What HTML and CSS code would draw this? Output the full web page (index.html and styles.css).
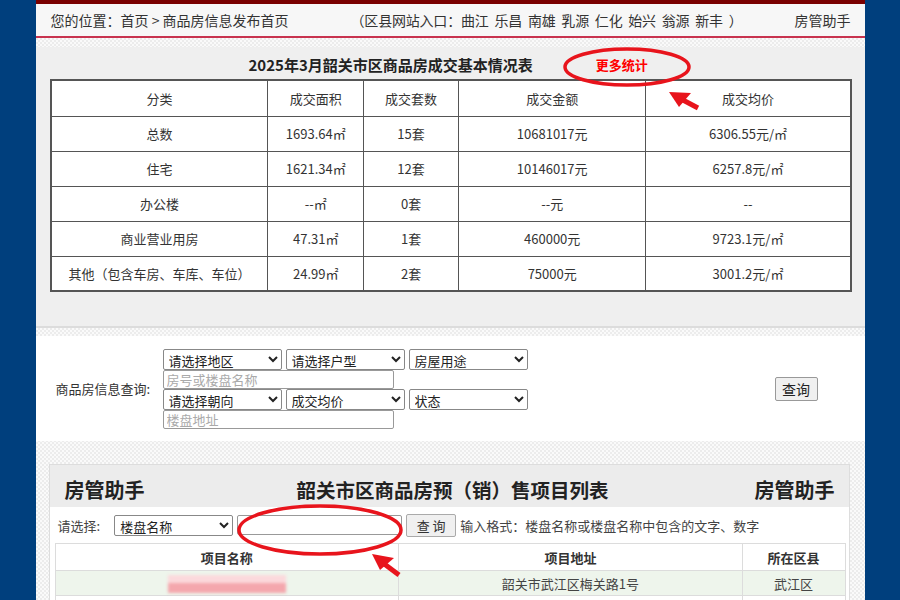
FILE: index.html
```html
<!DOCTYPE html>
<html lang="zh-CN">
<head>
    <meta charset="UTF-8">
    <meta name="viewport" content="width=device-width, initial-scale=1.0">
    <title>商品房信息发布首页</title>
    <link rel="stylesheet" href="styles.css">
</head>
<body>
<div class="page">
    <div class="topLine"></div>
    <div class="crumb">
        <span>您的位置：首页 &gt; 商品房信息发布首页</span>
        <span class="crumbCounty">（区县网站入口：曲江&nbsp; 乐昌&nbsp; 南雄&nbsp; 乳源&nbsp; 仁化&nbsp; 始兴&nbsp; 翁源&nbsp; 新丰 &nbsp;）</span>
        <span class="crumbRight">房管助手</span>
    </div>
    <div class="strip"></div>

    <div class="stats">
        <div class="statsTitle">
            <span class="statsName">2025年3月韶关市区商品房成交基本情况表</span>
            <a class="moreLink">更多统计</a>
        </div>
        <table class="statsTable">
            <tr class="headRow">
                <td class="c1">分类</td>
                <td class="c2">成交面积</td>
                <td class="c3">成交套数</td>
                <td class="c4">成交金额</td>
                <td class="c5">成交均价</td>
            </tr>
            <tr><td>总数</td><td>1693.64㎡</td><td>15套</td><td>10681017元</td><td>6306.55元/㎡</td></tr>
            <tr><td>住宅</td><td>1621.34㎡</td><td>12套</td><td>10146017元</td><td>6257.8元/㎡</td></tr>
            <tr><td>办公楼</td><td>--㎡</td><td>0套</td><td>--元</td><td>--</td></tr>
            <tr><td>商业营业用房</td><td>47.31㎡</td><td>1套</td><td>460000元</td><td>9723.1元/㎡</td></tr>
            <tr><td>其他（包含车房、车库、车位）</td><td>24.99㎡</td><td>2套</td><td>75000元</td><td>3001.2元/㎡</td></tr>
        </table>
    </div>
    <div class="strip strip2"></div>

    <div class="query">
        <div class="queryLabel">商品房信息查询:</div>
        <div class="queryFields">
            <div class="selRow">
                <select class="sel"><option>请选择地区</option></select>
                <select class="sel"><option>请选择户型</option></select>
                <select class="sel"><option>房屋用途</option></select>
            </div>
            <input class="txt" type="text" placeholder="房号或楼盘名称">
            <div class="selRow">
                <select class="sel"><option>请选择朝向</option></select>
                <select class="sel"><option>成交均价</option></select>
                <select class="sel"><option>状态</option></select>
            </div>
            <input class="txt" type="text" placeholder="楼盘地址">
        </div>
        <button class="queryBtn">查询</button>
    </div>

    <div class="listWrap">
        <div class="listPanel">
            <div class="listHead">
                <span>房管助手</span>
                <span class="listTitle">韶关市区商品房预（销）售项目列表</span>
                <span>房管助手</span>
            </div>
            <div class="searchRow">
                <span>请选择:</span>
                <select class="sel sel2"><option>楼盘名称</option></select>
                <input class="txt2" type="text">
                <button class="searchBtn">查 询</button>
                <span>输入格式：楼盘名称或楼盘名称中包含的文字、数字</span>
            </div>
            <table class="listTable">
                <tr class="listTh">
                    <td class="l1">项目名称</td>
                    <td class="l2">项目地址</td>
                    <td class="l3">所在区县</td>
                </tr>
                <tr class="listTr">
                    <td><span class="blurName"></span></td>
                    <td>韶关市武江区梅关路1号</td>
                    <td>武江区</td>
                </tr>
                <tr class="listTr2"><td></td><td></td><td></td></tr>
            </table>
        </div>
    </div>

    <!-- red marks drawn on the screenshot -->
    <svg class="marks" width="900" height="600" viewBox="0 0 900 600">
        <ellipse cx="626" cy="67" rx="62" ry="18" fill="none" stroke="#e8141c" stroke-width="3.5"/>
        <line x1="697" y1="108" x2="680" y2="99" stroke="#e8141c" stroke-width="5"/>
        <polygon points="668,92 690,93 678,107" fill="#e8141c"/>
        <ellipse cx="319" cy="530" rx="81" ry="24" fill="none" stroke="#e8141c" stroke-width="3.5"/>
        <line x1="398" y1="575" x2="382" y2="563" stroke="#e8141c" stroke-width="5"/>
        <polygon points="371,554 393,558 379,570" fill="#e8141c"/>
    </svg>
</div>
</body>
</html>
```

FILE: styles.css
```css
*{
    padding: 0;
    margin: 0;
    box-sizing: border-box;
}
body{
    background-color: #003f7d;
    font-family: "Noto Sans CJK SC", "Liberation Sans", sans-serif;
    color: #333;
    font-size: 13px;
}
.page{
    position: relative;
    width: 829px;
    height: 600px;
    margin: 0 auto;
    overflow: hidden;
    background: repeating-conic-gradient(#ececec 0 25%, #fafafa 0 50%) 0 0 / 4px 4px;
}
.topLine{
    height: 4px;
    background-color: #7a0000;
}
.crumb{
    height: 34px;
    display: flex;
    align-items: center;
    padding: 0 14px 0 15px;
    background-color: #f7f7f7;
    border-bottom: 2px solid #c8334f;
    font-size: 14px;
    color: #333;
}
.crumbCounty{
    margin-left: 62px;
    letter-spacing: -0.2px;
}
.crumbRight{
    margin-left: auto;
}
.strip{
    height: 9px;
}
.stats{
    background-color: #efefef;
    padding: 3px 13px 34px 14px;
    border-bottom: 2px solid #dcdcdc;
}
.statsTitle{
    height: 29px;
    display: flex;
    align-items: center;
    font-size: 15px;
    font-weight: bold;
    color: #222;
}
.statsName{
    margin-left: 199px;
}
.moreLink{
    margin-left: 63px;
    font-size: 13px;
    color: #f00;
}
.statsTable{
    width: 802px;
    border-collapse: collapse;
    background-color: #fff;
    border: 2px solid #555;
}
.statsTable td{
    border: 1px solid #555;
    height: 35px;
    text-align: center;
    color: #333;
}
.statsTable .headRow td{
    height: 36px;
}
.c1{ width: 218px; }
.c2{ width: 96px; }
.c3{ width: 95px; }
.c4{ width: 188px; }
.c5{ width: 205px; }
.strip2{
    height: 8px;
}
.query{
    height: 105px;
    background-color: #fff;
    display: flex;
    align-items: center;
    padding: 0 47px 0 20px;
}
.queryLabel{
    flex-shrink: 0;
    width: 107px;
    font-size: 13px;
}
.queryFields{
    flex-shrink: 0;
    display: flex;
    flex-direction: column;
}
.selRow{
    display: flex;
    gap: 4px;
}
.sel{
    flex-shrink: 0;
    width: 119px;
    height: 21px;
    padding: 0 1px;
    font-family: "Noto Sans CJK SC", sans-serif;
    font-size: 13px;
    color: #222;
    border: 1px solid #888;
    border-radius: 2px;
    background-color: #fff;
}
.txt{
    width: 231px;
    height: 19px;
    border: 1px solid #999;
    border-radius: 2px;
    padding-left: 3px;
    font-family: "Noto Sans CJK SC", sans-serif;
    font-size: 13px;
}
.txt::placeholder{
    color: #aaa;
}
.queryBtn{
    flex-shrink: 0;
    margin-left: auto;
    width: 43px;
    height: 24px;
    font-family: "Noto Sans CJK SC", sans-serif;
    font-size: 14px;
    color: #222;
    background-color: #f0f0f0;
    border: 1px solid #999;
    border-radius: 2px;
}
.listWrap{
    padding: 23px 15px 0 13px;
}
.listPanel{
    background-color: #fff;
    border: 1px solid #ddd;
    height: 200px;
}
.listHead{
    height: 42px;
    background-color: #ececec;
    display: flex;
    align-items: flex-end;
    justify-content: space-between;
    padding: 0 14px 3px 15px;
    font-size: 20px;
    font-weight: bold;
    color: #222;
}
.listHead .listTitle{
    font-size: 19.5px;
    margin-left: 6px;
}
.searchRow{
    display: flex;
    align-items: center;
    height: 36px;
    padding-left: 8px;
    gap: 4px;
    font-size: 13px;
    color: #444;
}
.sel2{
    margin-left: 10px;
    height: 21px;
}
.txt2{
    width: 165px;
    height: 20px;
    border: 1px solid #999;
    border-radius: 2px;
}
.searchBtn{
    width: 50px;
    height: 23px;
    font-family: "Noto Sans CJK SC", sans-serif;
    font-size: 13px;
    color: #333;
    background-color: #f0f0f0;
    border: 1px solid #aaa;
    border-radius: 2px;
}
.listTable{
    width: 791px;
    margin-left: 5px;
    border-collapse: collapse;
}
.listTable td{
    border: 1px solid #dcdcdc;
    text-align: center;
    font-size: 13px;
    color: #444;
}
.listTh td{
    height: 27px;
    font-weight: bold;
    color: #333;
}
.listTr td{
    height: 25px;
    background-color: #eef5ec;
}
.listTr2 td{
    height: 25px;
}
.l1{ width: 344px; }
.l2{ width: 344px; }
.l3{ width: 103px; }
.blurName{
    display: inline-block;
    width: 118px;
    height: 18px;
    vertical-align: middle;
    background: linear-gradient(#fbd9dc 0 45%, #f4a7ad 45% 100%);
    filter: blur(1.5px);
}
.marks{
    position: absolute;
    top: 0;
    left: -35px;
    pointer-events: none;
}
```
